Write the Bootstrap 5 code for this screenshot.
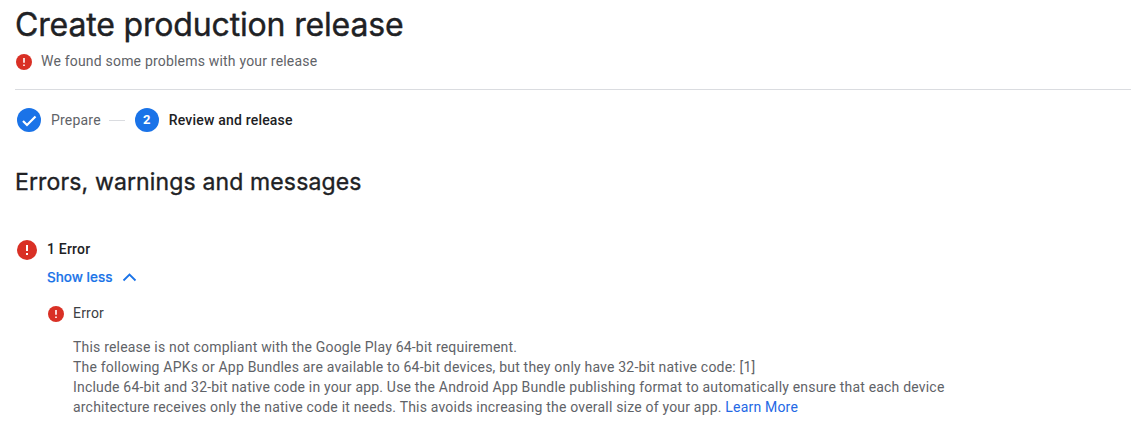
<!DOCTYPE html>
<html lang="en">
<head>
    <meta charset="UTF-8">
    <meta name="viewport" content="width=device-width, initial-scale=1">
    <title>Create production release</title>
    <link href="https://cdn.jsdelivr.net/npm/bootstrap@5.3.0/dist/css/bootstrap.min.css" rel="stylesheet">
    <style>
        body {
            font: 400 14px/20px Roboto, sans-serif;
            letter-spacing: .195px;
            color: #5f6368;
            overflow: hidden;
        }
        .page-body { padding-left: 15px; }
        .release-title {
            font: 400 32px/44px Inter, sans-serif;
            letter-spacing: -.16px;
            -webkit-text-stroke: .4px #202124;
            color: #202124;
            padding-top: 3px;
        }
        .section-title {
            font: 400 23px/32px Inter, sans-serif;
            letter-spacing: .14px;
            -webkit-text-stroke: .35px #202124;
            color: #202124;
            margin-top: 34px;
        }
        .page-status { padding: 4px 0 0 1px; gap: 9px; }
        .page-status svg, .error-item svg { margin-top: 1px; }
        .divider { border-top: 1px solid #dadce0; margin-top: 18px; }
        .stepper { margin: 18px 0 0 2px; }
        .step-dot {
            width: 24px;
            height: 24px;
            background: #1a73e8;
            font-size: 13px;
        }
        .step-line { width: 16px; height: 1px; background: #dadce0; margin: 0 10px 0 8px; }
        .step-name { margin-left: 10px; }
        .strong-text { color: #202124; font-weight: 500; }
        .error-group { margin: 41px 0 0 2px; }
        .group-icon { margin-top: 1px; }
        .group-body { margin-left: 10px; }
        .toggle-link {
            font: 500 13.5px/20px Inter, sans-serif;
            letter-spacing: 0;
            -webkit-text-stroke: .2px #1a73e8;
            color: #1a73e8;
            margin-top: 8px;
        }
        .error-item { margin: 16px 0 0 1px; gap: 9px; color: #3c4043; }
        .error-text { margin: 14px 0 0 26px; }
        .error-text a { color: #2468e5; text-decoration: none; }
    </style>
</head>
<body>

    <svg class="d-none">
        <symbol id="error-icon" viewBox="0 0 20 20">
            <circle cx="10" cy="10" r="10" fill="#d93025"/>
            <path d="M9 5h2v6H9zM9 13h2v2H9z" fill="#fff"/>
        </symbol>
    </svg>

    <main class="page-body">
        <h1 class="release-title mb-0">Create production release</h1>
        <div class="page-status d-flex align-items-center">
            <svg width="16" height="16"><use href="#error-icon"/></svg>
            <span>We found some problems with your release</span>
        </div>
        <div class="divider"></div>

        <div class="stepper d-flex align-items-center">
            <span class="step-dot rounded-circle d-flex align-items-center justify-content-center">
                <svg width="24" height="24" viewBox="0 0 24 24"><path d="M6 13l4 4 8.500-8.500" fill="none" stroke="#fff" stroke-width="2.200"/></svg>
            </span>
            <span class="step-name">Prepare</span>
            <span class="step-line"></span>
            <span class="step-dot rounded-circle d-flex align-items-center justify-content-center text-white fw-bold">2</span>
            <span class="step-name strong-text">Review and release</span>
        </div>

        <h2 class="section-title mb-0">Errors, warnings and messages</h2>

        <section class="error-group d-flex align-items-start">
            <svg class="group-icon" width="20" height="20"><use href="#error-icon"/></svg>
            <div class="group-body">
                <div class="strong-text">1 Error</div>
                <div class="toggle-link d-flex align-items-center gap-2">
                    <span>Show less</span>
                    <svg width="18" height="18" viewBox="0 0 18 18"><path d="M3.500 12.500L9.500 6.500l6 6" fill="none" stroke="#1a73e8" stroke-width="1.800"/></svg>
                </div>
                <div class="error-item d-flex align-items-center">
                    <svg width="16" height="16"><use href="#error-icon"/></svg>
                    <span>Error</span>
                </div>
                <div class="error-text">
                    <div>This release is not compliant with the Google Play 64-bit requirement.</div>
                    <div>The following APKs or App Bundles are available to 64-bit devices, but they only have 32-bit native code: [1]</div>
                    <div>Include 64-bit and 32-bit native code in your app. Use the Android App Bundle publishing format to automatically ensure that each device</div>
                    <div>architecture receives only the native code it needs. This avoids increasing the overall size of your app. <a href="#">Learn More</a></div>
                </div>
            </div>
        </section>
    </main>

    <script src="https://cdn.jsdelivr.net/npm/bootstrap@5.3.0/dist/js/bootstrap.bundle.min.js"></script>
</body>
</html>
